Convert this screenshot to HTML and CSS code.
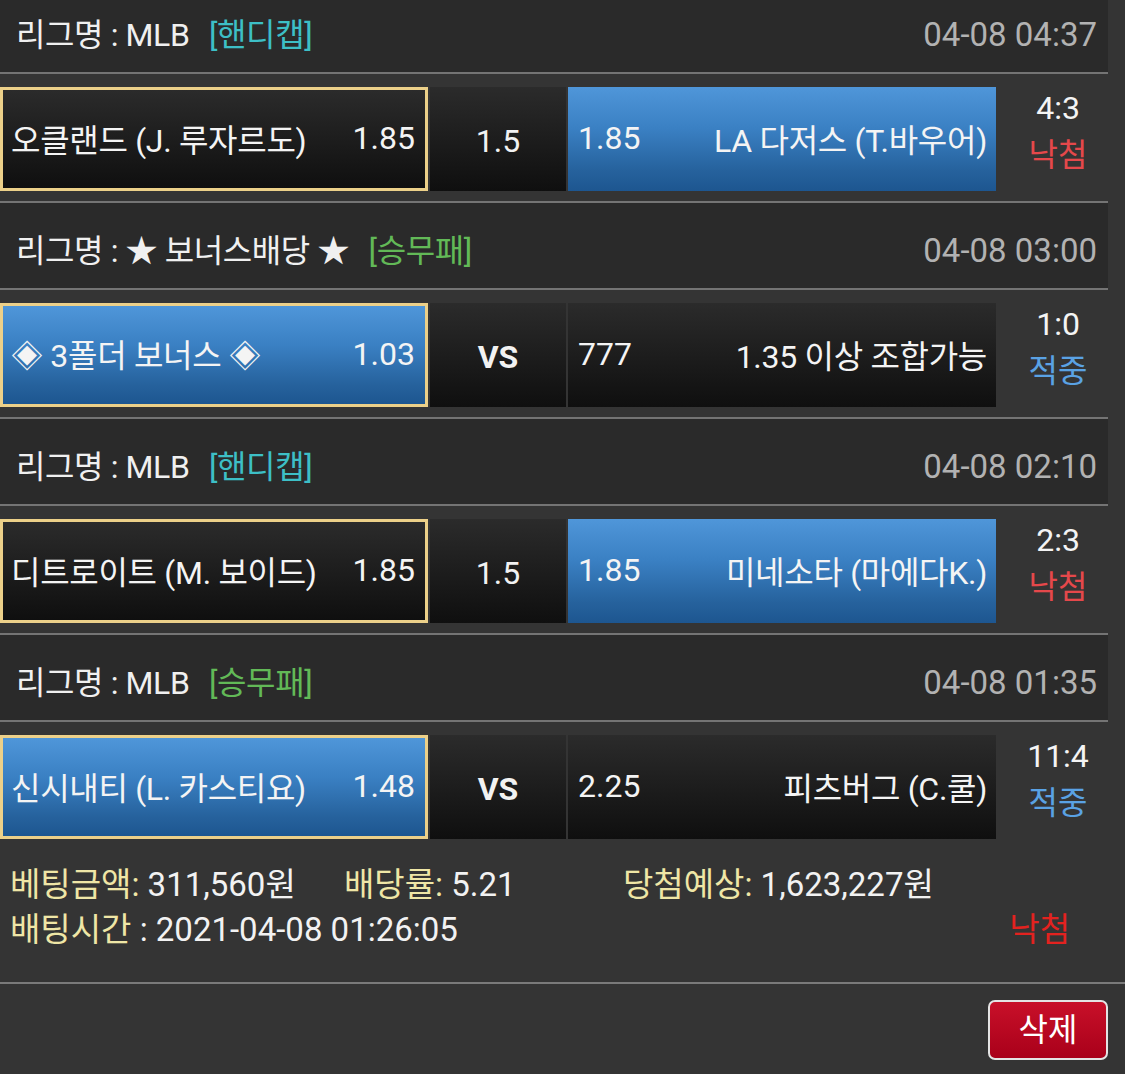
FILE: index.html
```html
<!DOCTYPE html>
<html lang="ko">
<head>
<meta charset="utf-8">
<title>배팅내역</title>
<link rel="stylesheet" href="styles.css">
</head>
<body>
<div class="list">
  <section class="game">
    <div class="game-head">
      <div class="league">리그명 : MLB <span class="type handi">[핸디캡]</span></div>
      <div class="time">04-08 04:37</div>
    </div>
    <div class="match">
      <div class="team home"><span class="name">오클랜드 (J. 루자르도)</span><span class="odds">1.85</span></div>
      <div class="mid">1.5</div>
      <div class="team away picked"><span class="odds">1.85</span><span class="name">LA 다저스 (T.바우어)</span></div>
      <div class="result"><div class="score">4:3</div><div class="st lose">낙첨</div></div>
    </div>
  </section>
  <section class="game">
    <div class="game-head">
      <div class="league">리그명 : ★ 보너스배당 ★ <span class="type wdl">[승무패]</span></div>
      <div class="time">04-08 03:00</div>
    </div>
    <div class="match">
      <div class="team home picked"><span class="name">◈ 3폴더 보너스 ◈</span><span class="odds">1.03</span></div>
      <div class="mid vs">VS</div>
      <div class="team away"><span class="odds">777</span><span class="name">1.35 이상 조합가능</span></div>
      <div class="result"><div class="score">1:0</div><div class="st win">적중</div></div>
    </div>
  </section>
  <section class="game">
    <div class="game-head">
      <div class="league">리그명 : MLB <span class="type handi">[핸디캡]</span></div>
      <div class="time">04-08 02:10</div>
    </div>
    <div class="match">
      <div class="team home"><span class="name">디트로이트 (M. 보이드)</span><span class="odds">1.85</span></div>
      <div class="mid">1.5</div>
      <div class="team away picked"><span class="odds">1.85</span><span class="name">미네소타 (마에다K.)</span></div>
      <div class="result"><div class="score">2:3</div><div class="st lose">낙첨</div></div>
    </div>
  </section>
  <section class="game">
    <div class="game-head">
      <div class="league">리그명 : MLB <span class="type wdl">[승무패]</span></div>
      <div class="time">04-08 01:35</div>
    </div>
    <div class="match">
      <div class="team home picked"><span class="name">신시내티 (L. 카스티요)</span><span class="odds">1.48</span></div>
      <div class="mid vs">VS</div>
      <div class="team away"><span class="odds">2.25</span><span class="name">피츠버그 (C.쿨)</span></div>
      <div class="result"><div class="score">11:4</div><div class="st win">적중</div></div>
    </div>
  </section>
</div>
<div class="summary">
  <div class="sum-row cols">
    <div><span class="label">베팅금액:</span> 311,560원</div>
    <div><span class="label">배당률:</span> 5.21</div>
    <div><span class="label">당첨예상:</span> 1,623,227원</div>
  </div>
  <div class="sum-row split">
    <div><span class="label">배팅시간</span> : 2021-04-08 01:26:05</div>
    <div class="final-lose">낙첨</div>
  </div>
</div>
<div class="actions">
  <button class="btn-delete" type="button">삭제</button>
</div>
</body>
</html>
```
FILE: styles.css
```css
* { box-sizing: border-box; }
html, body { margin: 0; padding: 0; }
body {
  background: #343434;
  width: 1125px;
  height: 1074px;
  overflow: hidden;
  font-family: "Roboto", "Noto Sans CJK KR", sans-serif;
  color: #f2f2f2;
}
.list { width: 1108px; margin-top: -15px; }
.game { border-top: 2px solid #747474; }
.game-head {
  height: 87px;
  background: #2a2a2a;
  border-bottom: 2px solid #747474;
  display: flex;
  justify-content: space-between;
  align-items: center;
  padding: 10px 11px 0 16px;
  white-space: nowrap;
}
.league { font-size: 32px; line-height: 40px; letter-spacing: -0.4px; color: #f0f0f0; }
.type { margin-left: 12px; }
.handi { color: #3dbfc6; }
.wdl { color: #62b957; }
.time { font-size: 33px; line-height: 40px; color: #b2b2b2; }

.match {
  display: flex;
  height: 104px;
  margin: 13px 0 10px;
  gap: 2px;
}
.team {
  width: 428px;
  height: 104px;
  display: flex;
  align-items: center;
  justify-content: space-between;
  background: linear-gradient(#2b2b2b, #0f0f0f);
  font-size: 32px;
  letter-spacing: -0.3px;
  white-space: nowrap;
  color: #f4f4f4;
}
.home { border: 3px solid #ecd089; padding: 0 10px 2px 8px; }
.away { padding: 0 9px 2px 10px; }
.picked { background: linear-gradient(#4f96d9 0%, #3a80c3 40%, #26629d 80%, #1d5690 100%); }
.odds { letter-spacing: 0; }
.mid {
  width: 136px;
  display: flex;
  align-items: center;
  justify-content: center;
  background: linear-gradient(#2b2b2b, #0f0f0f);
  font-size: 32px;
  padding-top: 4px;
}
.mid.vs { font-weight: 700; font-size: 32px; }
.result {
  flex: 1;
  padding-left: 10px;
  text-align: center;
  font-size: 32px;
  line-height: 47px;
  margin-top: -2px;
}
.score { color: #f4f4f4; }
.lose { color: #e5484b; }
.win { color: #5aa2e4; }

.summary {
  width: 1125px;
  height: 135px;
  padding: 13px 55px 0 10px;
  border-bottom: 2px solid #7a7a7a;
  font-size: 33px;
  line-height: 45px;
  white-space: nowrap;
}
.cols { display: grid; grid-template-columns: 334px 279px 1fr; }
.split { display: flex; justify-content: space-between; }
.label { color: #efe6a6; }
.final-lose { color: #e3221f; }

.actions { display: flex; justify-content: flex-end; padding: 16px 17px 0 0; }
.btn-delete {
  width: 120px;
  height: 60px;
  background: linear-gradient(#c81029, #a9001a);
  border: 2px solid #e4e4e4;
  border-radius: 7px;
  color: #ffffff;
  font-family: "Roboto", "Noto Sans CJK KR", sans-serif;
  font-size: 32px;
  line-height: 1;
  padding: 0;
}
```
